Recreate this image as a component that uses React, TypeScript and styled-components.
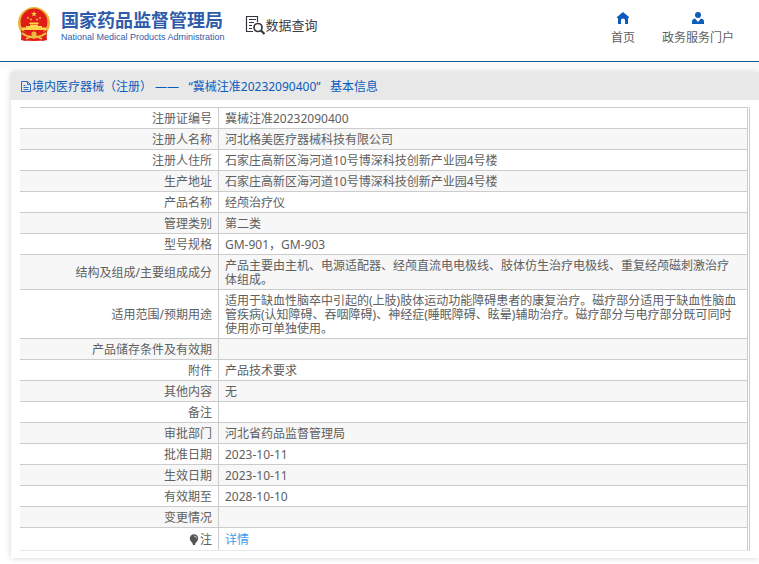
import React from 'react';
import styled, { createGlobalStyle } from 'styled-components';

const GlobalStyle = createGlobalStyle`
  *, *::before, *::after { box-sizing: border-box; }
  body {
    margin: 0;
    background: #fff;
    color: #606060;
    font: 12px/14px "Noto Sans", "Noto Sans CJK SC", sans-serif;
    overflow-x: hidden;
  }
  a { color: inherit; text-decoration: none; }
`;

const Header = styled.header`
  display: flex;
  align-items: flex-start;
  height: 62px;
  padding: 7px 25px 0 17px;
  border-bottom: 1px solid #175a94;
`;

const Brand = styled.a`
  display: flex;
  gap: 10px;
  color: #2f5caa;
`;

const BrandText = styled.span`
  display: flex;
  flex-direction: column;
  padding-top: 2px;
`;

const BrandName = styled.span`
  font-size: 18px;
  line-height: 22px;
  font-weight: 700;
  white-space: nowrap;
`;

const BrandEnglish = styled.span`
  font: 400 9px/13px "Liberation Sans", Arial, sans-serif;
  white-space: nowrap;
`;

const Search = styled.a`
  display: flex;
  align-items: center;
  margin: 7px 0 0 20px;
  color: #3d3d42;
  font-size: 13px;
  line-height: 22px;
  white-space: nowrap;
`;

const Nav = styled.nav`
  display: flex;
  gap: 27px;
  margin-left: auto;
`;

const NavLink = styled.a`
  display: flex;
  flex-direction: column;
  align-items: center;
  gap: 6px;
  padding-top: 5px;
  line-height: 16px;
  white-space: nowrap;
  svg { display: block; fill: #0b5cbc; }
`;

const Backdrop = styled.main`
  padding: 10px 0 6px 11px;
  background: linear-gradient(#f8f8f8, #fff 10px);
  overflow: hidden;
`;

const Panel = styled.section`
  padding-bottom: 7px;
  background: #fff;
  box-shadow: 0 0 6px rgba(0, 0, 0, 0.18);
`;

const PanelTitle = styled.h1`
  display: flex;
  align-items: center;
  gap: 1px;
  height: 28px;
  margin: 0;
  padding: 2px 0 0 10px;
  background: #e8e8e8;
  color: #0b5cbc;
  font-size: 12px;
  font-weight: 400;
  white-space: pre;
`;

const TableFrame = styled.div`
  margin: 7px 9px 0;
  padding-right: 1px;
  border-right: 1px solid #ccc;
`;

const Table = styled.table`
  width: 100%;
  table-layout: fixed;
  border-spacing: 0;
  border-right: 1px solid #ccc;
  border-bottom: 1px solid #e8e8e8;
`;

const Row = styled.tr<{ $tall?: boolean }>`
  height: ${({ $tall }) => ($tall ? 23 : 21)}px;
  &:nth-child(even) { background: #f7f7f7; }
`;

const Label = styled.th`
  width: 199px;
  padding: 4px 6px 2px;
  border-top: 1px solid #ccc;
  border-right: 1px solid #ccc;
  font-weight: 400;
  text-align: right;
  vertical-align: middle;
`;

const Value = styled.td`
  padding: 4px 9px 2px 6px;
  border-top: 1px solid #ccc;
  vertical-align: middle;
`;

const Note = styled.span`
  display: flex;
  align-items: center;
  justify-content: flex-end;
  gap: 1px;
`;

const DetailLink = styled.a`
  color: #459ae9;
`;

const rows: [string, string][] = [
  ['注册证编号', '冀械注准20232090400'],
  ['注册人名称', '河北格美医疗器械科技有限公司'],
  ['注册人住所', '石家庄高新区海河道10号博深科技创新产业园4号楼'],
  ['生产地址', '石家庄高新区海河道10号博深科技创新产业园4号楼'],
  ['产品名称', '经颅治疗仪'],
  ['管理类别', '第二类'],
  ['型号规格', 'GM-901，GM-903'],
  ['结构及组成/主要组成成分', '产品主要由主机、电源适配器、经颅直流电电极线、肢体仿生治疗电极线、重复经颅磁刺激治疗体组成。'],
  ['适用范围/预期用途', '适用于缺血性脑卒中引起的(上肢)肢体运动功能障碍患者的康复治疗。磁疗部分适用于缺血性脑血管疾病(认知障碍、吞咽障碍)、神经症(睡眠障碍、眩晕)辅助治疗。磁疗部分与电疗部分既可同时使用亦可单独使用。'],
  ['产品储存条件及有效期', ''],
  ['附件', '产品技术要求'],
  ['其他内容', '无'],
  ['备注', ''],
  ['审批部门', '河北省药品监督管理局'],
  ['批准日期', '2023-10-11'],
  ['生效日期', '2023-10-11'],
  ['有效期至', '2028-10-10'],
  ['变更情况', ''],
];

const starPoints = (cx: number, cy: number, r: number) =>
  Array.from({ length: 10 }, (_, i) => {
    const radius = i % 2 ? r * 0.4 : r;
    const angle = (Math.PI * i) / 5 - Math.PI / 2;
    return `${cx + radius * Math.cos(angle)},${cy + radius * Math.sin(angle)}`;
  }).join(' ');

const Emblem = () => (
  <svg width="34" height="35" viewBox="0 0 34 35" aria-hidden="true">
    <path d="M5 23L4 33L9 34L12 31L17 33L22 31L25 34L30 33L29 23Z" fill="#d9251c" />
    <circle cx="17" cy="16" r="16" fill="#edb53c" />
    <circle cx="17" cy="15" r="13.4" fill="#df1d18" />
    <polygon points={starPoints(17, 7, 3)} fill="#ffd64a" />
    <polygon points={starPoints(11, 11, 1.4)} fill="#ffd64a" />
    <polygon points={starPoints(14, 12.5, 1.4)} fill="#ffd64a" />
    <polygon points={starPoints(20, 12.5, 1.4)} fill="#ffd64a" />
    <polygon points={starPoints(23, 11, 1.4)} fill="#ffd64a" />
    <path d="M12 17L13 15.500H21L22 17ZM13 17.500H21V19H25V20.500H29V23H5V20.500H9V19H13Z" fill="#ffd64a" />
    <path d="M4 23Q17 31 30 23L29 33Q17 35 5 33Z" fill="#df1d18" />
    <circle cx="17" cy="27" r="2.600" fill="#f0b83b" />
    <path d="M5 26Q11 31 17 29Q23 31 29 26M9 32Q13 29 17 31Q21 29 25 32" fill="none" stroke="#efbc42" strokeWidth="1.800" />
  </svg>
);

const SearchIcon = () => (
  <svg width="21" height="21" viewBox="0 0 21 21" fill="none" stroke="#35353b" aria-hidden="true">
    <path d="M8 16.500H1.500V1.500H12.500V7M4 4.500H11M4 7.500H9M4 10.500H7M4 13.500H7" strokeWidth="1.2" />
    <circle cx="13" cy="12.500" r="4" strokeWidth="1.700" />
    <path d="M16 15.500L19.500 19" strokeWidth="2.200" />
  </svg>
);

const DocumentIcon = () => (
  <svg width="10" height="12" viewBox="0 0 10 12" fill="none" stroke="#2b70c5" aria-hidden="true">
    <path d="M.5.5H6.500L9.500 3.500V10.500H.5ZM6.500.5V3.500H9.500M2.500 4.500H4.500M2.500 6.500H7.500M2.500 8.500H7.500" />
  </svg>
);

const BulbIcon = () => (
  <svg width="10" height="12" viewBox="0 0 10 12" fill="#555" aria-hidden="true">
    <circle cx="5" cy="4.500" r="4.200" />
    <path d="M3 8H7L6 11H4Z" />
    <path d="M5 2Q7.500 2 7.500 4.500" fill="none" stroke="#ddd" strokeWidth=".8" />
  </svg>
);

export default function App() {
  return (
    <>
      <GlobalStyle />
      <Header>
        <Brand href="#">
          <Emblem />
          <BrandText>
            <BrandName>国家药品监督管理局</BrandName>
            <BrandEnglish>National Medical Products Administration</BrandEnglish>
          </BrandText>
        </Brand>
        <Search href="#"><SearchIcon />数据查询</Search>
        <Nav>
          <NavLink href="#">
            <svg width="12" height="12" viewBox="0 0 12 12" aria-hidden="true">
              <path d="M6 0L0 5V6H1V12H4V8Q4 6.500 6 6.500Q8 6.500 8 8V12H11V6H12V5Z" />
            </svg>
            首页
          </NavLink>
          <NavLink href="#">
            <svg width="12" height="12" viewBox="0 0 12 12" aria-hidden="true">
              <circle cx="6" cy="3" r="3" />
              <path d="M0 12V9.500Q0 7 3 6.500L6 10L9 6.500Q12 7 12 9.500V12Z" />
            </svg>
            政务服务门户
          </NavLink>
        </Nav>
      </Header>
      <Backdrop>
        <Panel>
          <PanelTitle>
            <DocumentIcon />
            <span>境内医疗器械（注册） ——   “冀械注准20232090400”   基本信息</span>
          </PanelTitle>
          <TableFrame>
            <Table>
              <tbody>
                {rows.map(([label, value]) => (
                  <Row key={label}>
                    <Label scope="row">{label}</Label>
                    <Value>{value}</Value>
                  </Row>
                ))}
                <Row $tall>
                  <Label scope="row"><Note><BulbIcon />注</Note></Label>
                  <Value><DetailLink href="#">详情</DetailLink></Value>
                </Row>
              </tbody>
            </Table>
          </TableFrame>
        </Panel>
      </Backdrop>
    </>
  );
}
